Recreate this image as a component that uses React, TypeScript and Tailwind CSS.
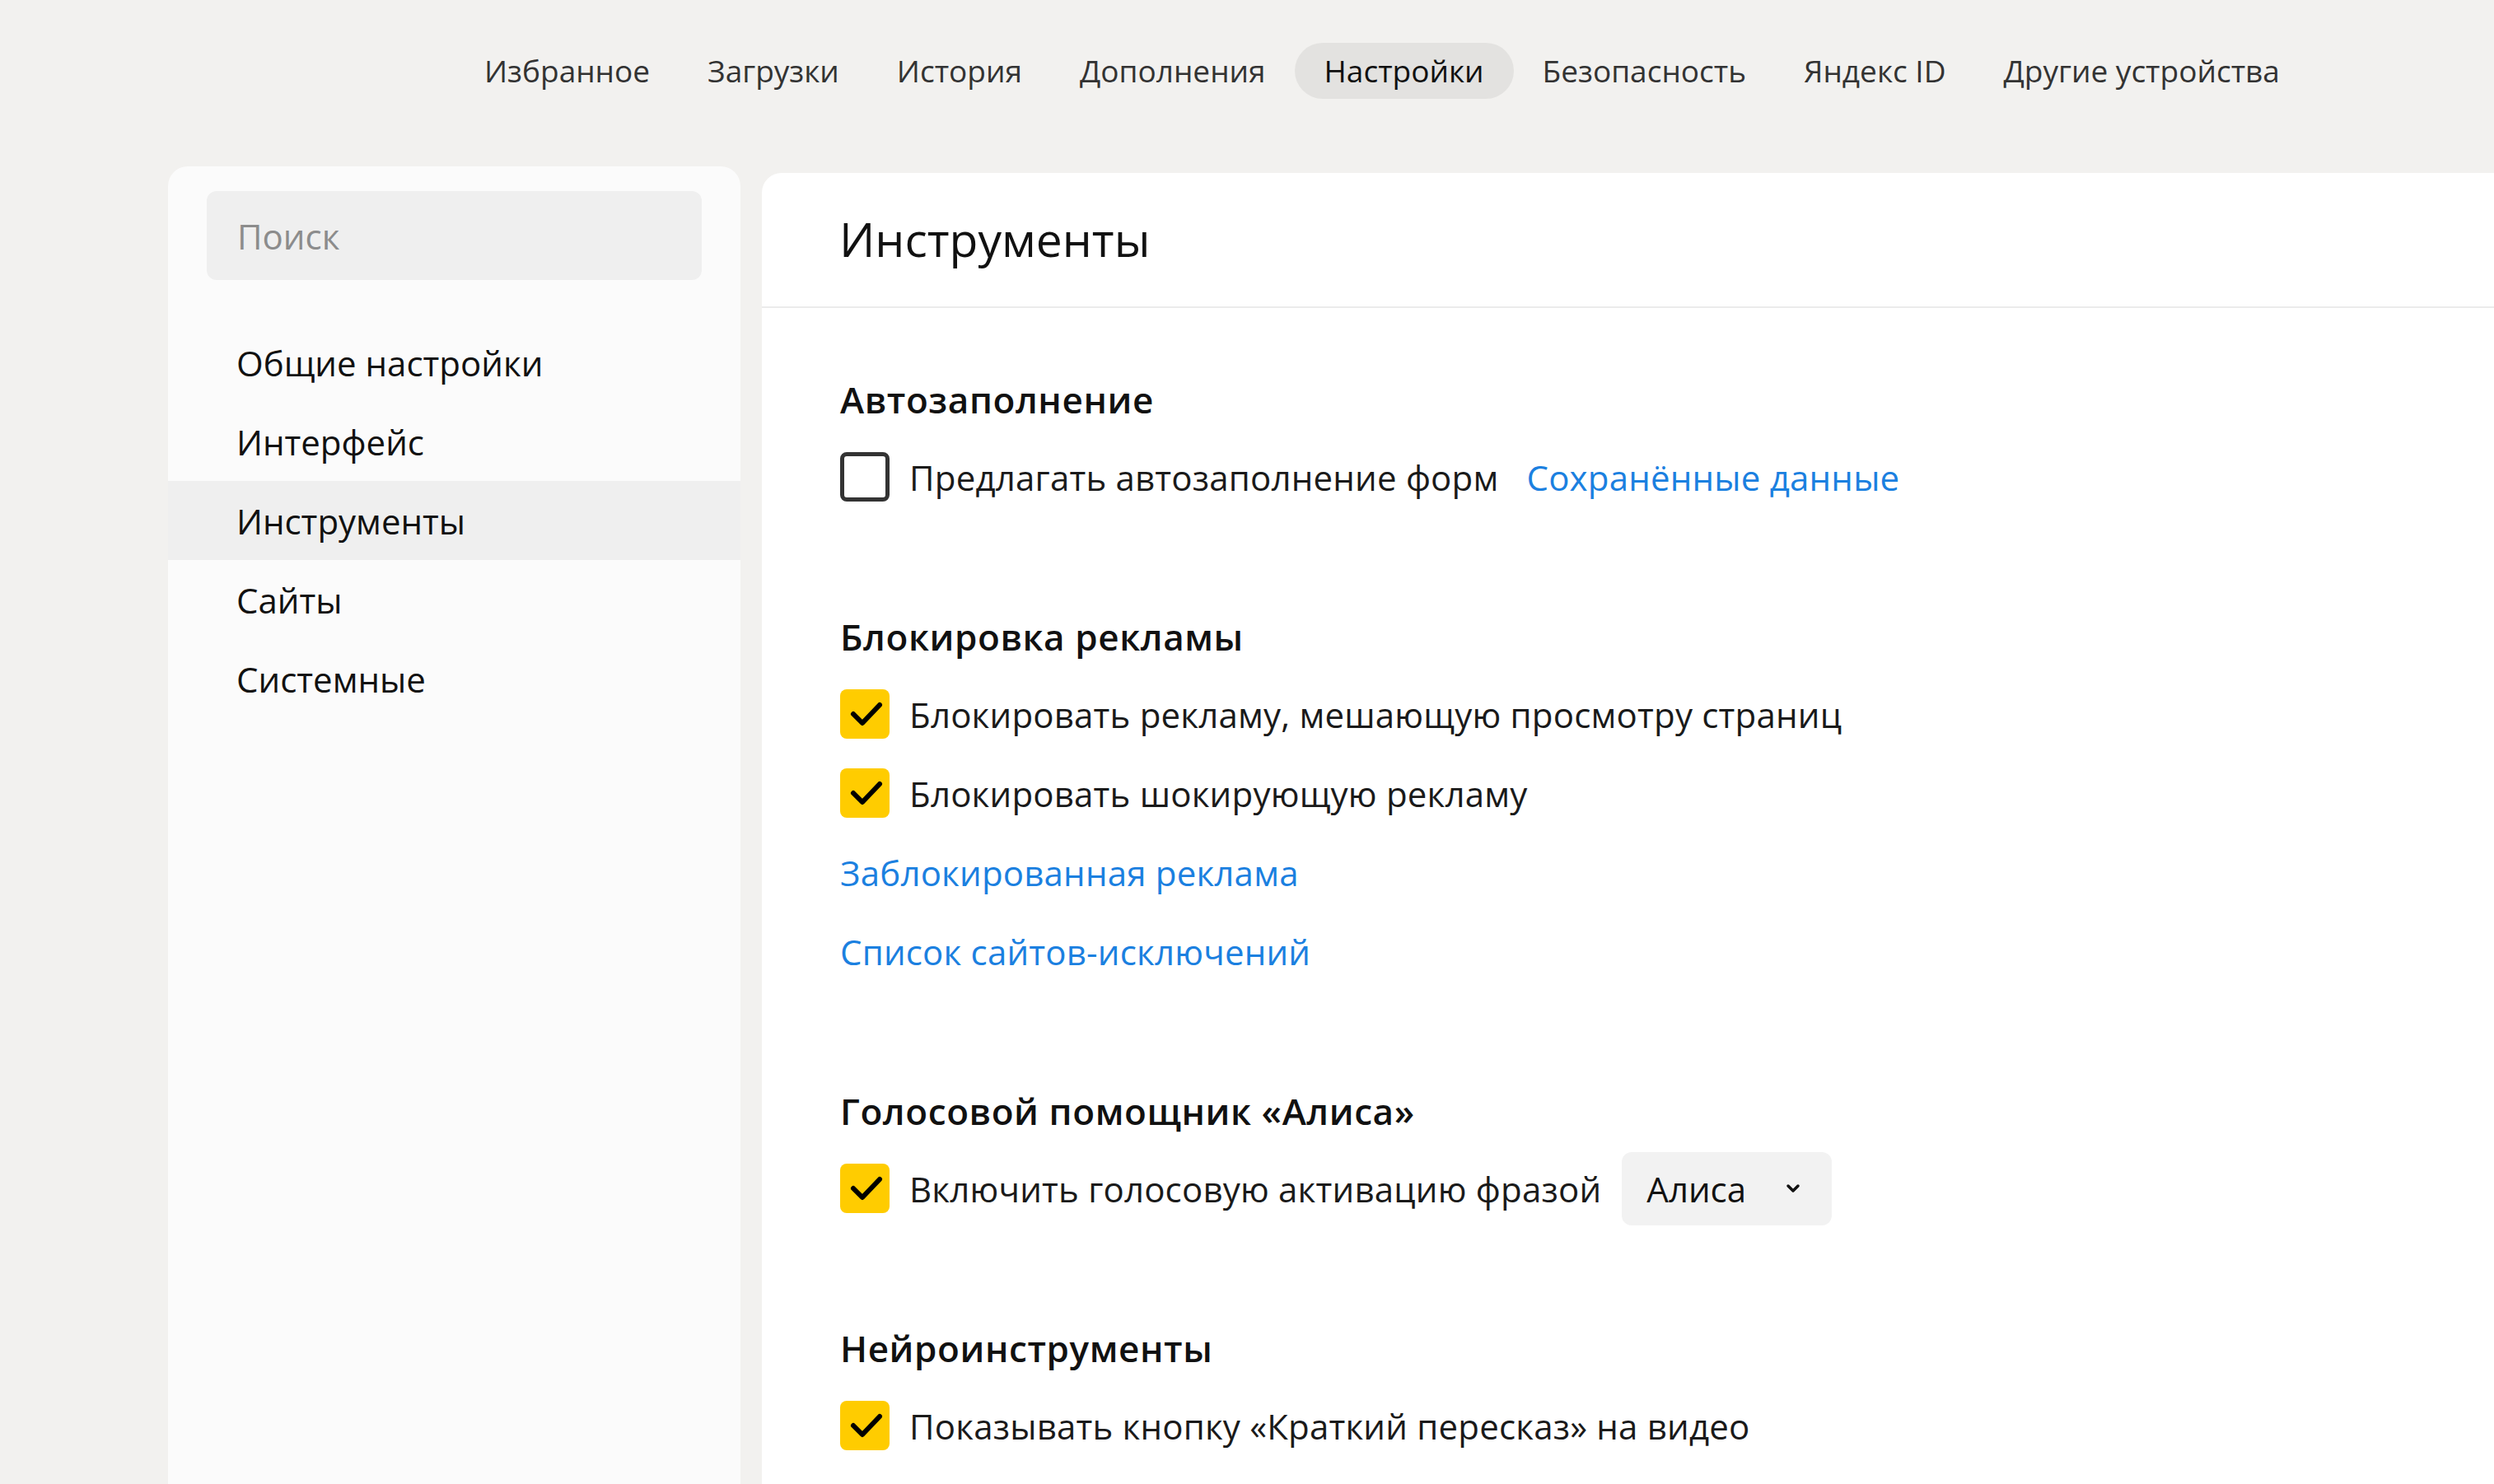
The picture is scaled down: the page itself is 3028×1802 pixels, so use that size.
import React from "react";

const font = { fontFamily: '"Open Sans", "Noto Sans", Arial, sans-serif' };

const topNav = [
  "Избранное",
  "Загрузки",
  "История",
  "Дополнения",
  "Настройки",
  "Безопасность",
  "Яндекс ID",
  "Другие устройства",
];

const sideNav = ["Общие настройки", "Интерфейс", "Инструменты", "Сайты", "Системные"];

function Check({ checked }: { checked: boolean }) {
  if (!checked) {
    return <div className="w-[60px] h-[60px] shrink-0 rounded-[8px] border-[5px] border-[#333333] bg-white" />;
  }
  return (
    <div className="w-[60px] h-[60px] shrink-0 rounded-[8px] bg-[#ffcc00] flex items-center justify-center">
      <svg width="60" height="60" viewBox="0 0 60 60">
        <path d="M16 30 L27 41 L48 19" fill="none" stroke="#000" strokeWidth="6" strokeLinecap="round" strokeLinejoin="round" />
      </svg>
    </div>
  );
}

function Heading({ children }: { children: React.ReactNode }) {
  return (
    <div className="h-[92px] flex items-center text-[44px] tracking-[0.6px] font-semibold text-[#111]">{children}</div>
  );
}

function Row({ checked, children, extra }: { checked: boolean; children: React.ReactNode; extra?: React.ReactNode }) {
  return (
    <div className="h-[96px] flex items-center">
      <Check checked={checked} />
      <span className="ml-[24px] text-[42px] tracking-[0.2px] text-[#1a1a1a]">{children}</span>
      {extra}
    </div>
  );
}

function LinkRow({ children }: { children: React.ReactNode }) {
  return <div className="h-[96px] flex items-center text-[42px] tracking-[0.2px] text-[#1b80e0]">{children}</div>;
}

export default function App() {
  return (
    <div className="w-full h-[1802px] overflow-hidden bg-[#f2f1ef] flex flex-col" style={font}>
      <nav className="flex pt-[52px] pl-[553px] h-[202px] items-start">
        {topNav.map((t) => (
          <div
            key={t}
            className={
              t === "Настройки"
                ? "h-[68px] px-[36px] rounded-full bg-[#e3e2e0] flex items-center text-[37px] text-[#111]"
                : "h-[68px] px-[35px] rounded-full flex items-center text-[37px] text-[#333]"
            }
          >
            {t}
          </div>
        ))}
      </nav>
      <div className="flex flex-1 pl-[204px] gap-[26px] items-stretch">
        <aside className="w-[695px] shrink-0 bg-[#fbfbfb] rounded-t-[24px] pt-[30px]">
          <div className="mx-[47px] h-[108px] rounded-[12px] bg-[#efefef] flex items-center pl-[37px] text-[42px] text-[#8c8c8c]">
            Поиск
          </div>
          <ul className="mt-[52px]">
            {sideNav.map((s) => (
              <li
                key={s}
                className={
                  s === "Инструменты"
                    ? "h-[96px] flex items-center pl-[83px] text-[42px] text-[#111] bg-[#efefef]"
                    : "h-[96px] flex items-center pl-[83px] text-[42px] text-[#111]"
                }
              >
                {s}
              </li>
            ))}
          </ul>
        </aside>
        <main className="flex-1 mt-[8px] bg-white rounded-tl-[24px]">
          <div className="h-[164px] border-b-2 border-[#ebebeb] flex items-center pl-[94px] text-[57px] text-[#111]">
            Инструменты
          </div>
          <div className="pl-[95px] pt-[65px]">
            <section>
              <Heading>Автозаполнение</Heading>
              <Row
                checked={false}
                extra={<span className="ml-[34px] text-[42px] tracking-[0.2px] text-[#1b80e0]">Сохранённые данные</span>}
              >
                Предлагать автозаполнение форм
              </Row>
            </section>
            <section className="mt-[100px]">
              <Heading>Блокировка рекламы</Heading>
              <Row checked>Блокировать рекламу, мешающую просмотру страниц</Row>
              <Row checked>Блокировать шокирующую рекламу</Row>
              <LinkRow>Заблокированная реклама</LinkRow>
              <LinkRow>Список сайтов-исключений</LinkRow>
            </section>
            <section className="mt-[100px]">
              <Heading>Голосовой помощник «Алиса»</Heading>
              <Row
                checked
                extra={
                  <div className="ml-[25px] w-[255px] h-[89px] rounded-[12px] bg-[#f2f2f2] flex items-center justify-between pl-[30px] pr-[37px]">
                    <span className="text-[42px] text-[#111]">Алиса</span>
                    <svg width="20" height="14" viewBox="0 0 20 14">
                      <path d="M4 4 L10 10 L16 4" fill="none" stroke="#111" strokeWidth="3.5" strokeLinecap="round" strokeLinejoin="round" />
                    </svg>
                  </div>
                }
              >
                Включить голосовую активацию фразой
              </Row>
            </section>
            <section className="mt-[100px]">
              <Heading>Нейроинструменты</Heading>
              <Row checked>Показывать кнопку «Краткий пересказ» на видео</Row>
            </section>
          </div>
        </main>
      </div>
    </div>
  );
}
